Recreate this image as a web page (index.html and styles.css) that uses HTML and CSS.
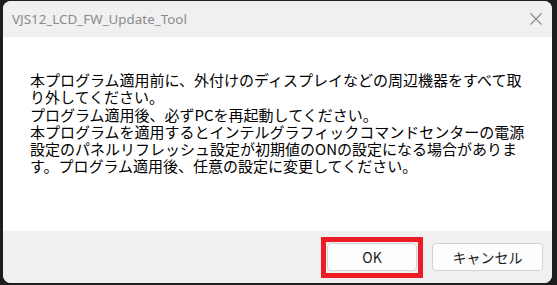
FILE: index.html
```html
<!DOCTYPE html>
<html lang="ja">
<head>
    <meta charset="UTF-8">
    <title>VJS12_LCD_FW_Update_Tool</title>
    <link rel="stylesheet" href="styles.css">
</head>
<body>
    <div class="window">
        <div class="titlebar">
            <span class="title">VJS12_LCD_FW_Update_Tool</span>
            <svg class="close" width="12" height="12" viewBox="0 0 12 12">
                <path d="M0.5 0.5 L11.5 11.5 M11.5 0.5 L0.5 11.5" stroke="#8a8a8a" stroke-width="1.1" fill="none"/>
            </svg>
        </div>
        <div class="content">
            <p class="message">本プログラム適用前に、外付けのディスプレイなどの周辺機器をすべて取<br>り外してください。<br>プログラム適用後、必ずPCを再起動してください。<br>本プログラムを適用するとインテルグラフィックコマンドセンターの電源<br>設定のパネルリフレッシュ設定が初期値のONの設定になる場合がありま<br>す。プログラム適用後、任意の設定に変更してください。</p>
        </div>
        <div class="footer">
            <button class="btn btn-ok">OK</button>
            <button class="btn btn-cancel">キャンセル</button>
        </div>
    </div>
</body>
</html>
```

FILE: styles.css
```css
body {
    margin: 0;
    padding: 0;
    background-color: #1e1e1e;
    font-family: "Noto Sans CJK JP", "Noto Sans", sans-serif;
}

.window {
    margin: 1px 5px 0 3px;
    width: 549px;
    height: 282px;
    border-radius: 8px;
    overflow: hidden;
    display: flex;
    flex-direction: column;
    background-color: #f0f0f0;
}

.titlebar {
    height: 36px;
    display: flex;
    align-items: center;
    justify-content: space-between;
    padding: 0 10px 0 9px;
    background-color: #f0f0f0;
}

.title {
    font-family: "Noto Sans", sans-serif;
    font-size: 13.4px;
    color: #8b8b8b;
}

.close {
    display: block;
}

.content {
    flex: 1;
    background-color: #ffffff;
    padding: 34px 0 0 27px;
}

.message {
    margin: 0;
    font-size: 15px;
    line-height: 17.3px;
    color: #000;
    white-space: nowrap;
}

.footer {
    height: 52px;
    box-sizing: border-box;
    padding: 12px 9px 0 0;
    display: flex;
    justify-content: flex-end;
    gap: 15px;
    background-color: #f0f0f0;
}

.btn {
    height: 28px;
    border: 1px solid #d3d3d3;
    border-radius: 4px;
    background-color: #fdfdfd;
    font-family: "Noto Sans CJK JP", "Noto Sans", sans-serif;
    font-size: 14px;
    color: #1a1a1a;
    padding: 0;
}

.btn-ok {
    width: 90px;
    position: relative;
}

/* red annotation frame around the OK button */
.btn-ok::after {
    content: "";
    position: absolute;
    top: -7px;
    right: -7px;
    bottom: -8px;
    left: -7px;
    border: 5px solid #ed1c24;
}

.btn-cancel {
    width: 111px;
}
```
